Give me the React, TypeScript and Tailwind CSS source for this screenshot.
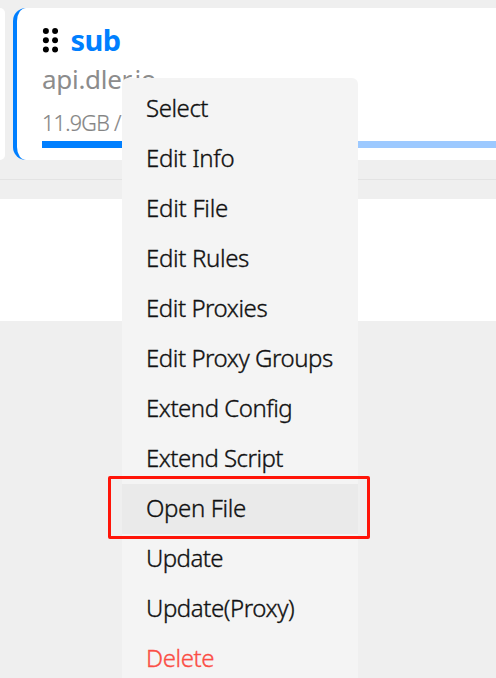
type Item = { label: string; spacing: string; tone?: string };

const items: Item[] = [
  { label: "Select", spacing: "tracking-[-0.45px]" },
  { label: "Edit Info", spacing: "tracking-[-0.3px]" },
  { label: "Edit File", spacing: "tracking-[-0.25px]" },
  { label: "Edit Rules", spacing: "tracking-[-0.35px]" },
  { label: "Edit Proxies", spacing: "tracking-[-0.45px]" },
  { label: "Edit Proxy Groups", spacing: "tracking-[-0.45px]" },
  { label: "Extend Config", spacing: "tracking-[-0.48px]" },
  { label: "Extend Script", spacing: "tracking-[-0.53px]" },
  { label: "Open File", spacing: "tracking-[-0.38px]", tone: "bg-[#eaeaea]" },
  { label: "Update", spacing: "tracking-[-0.55px]" },
  { label: "Update(Proxy)", spacing: "tracking-[-0.43px]" },
  { label: "Delete", spacing: "tracking-[-0.4px]", tone: "text-[#fb4d44]" },
];

function DragHandle() {
  return (
    <svg className="h-[26px] w-[16px] shrink-0" viewBox="0 0 16 26">
      {[3.9, 13.2, 22.6].map((y) => (
        <g key={y}>
          <circle cx="3.9" cy={y} r="3" />
          <circle cx="13.1" cy={y} r="3" />
        </g>
      ))}
    </svg>
  );
}

function ProfileCard() {
  return (
    <div className="h-[152px] flex-1 overflow-hidden rounded-l-[13px] border-l-4 border-[#007fff] bg-white pl-[24.5px]">
      <div className="flex h-[55px] items-center pt-[9px]">
        <DragHandle />
        <span className="ml-[13px] text-[29px] leading-[34px] font-bold tracking-[-0.6px] text-[#007fff]">sub</span>
      </div>
      <div className="h-[36px] pl-[0.5px] text-[26px] leading-[33px] tracking-[-0.3px] text-[#8c8c8c]">api.dler.io</div>
      <div className="h-[42px] pt-[7px] pl-[0.5px] text-[21.5px] leading-[33px] font-light tracking-[-0.7px] text-[#858585] [-webkit-text-stroke:0.2px_#858585]">11.9GB /</div>
      <div className="flex h-[6.5px] bg-[#9cc9ff]">
        <div className="w-[190px] bg-[#007fff]" />
      </div>
    </div>
  );
}

export default function App() {
  return (
    <div className="relative h-[678px] w-[496px] overflow-hidden bg-[#efefef] font-['Noto_Sans','Open_Sans',sans-serif]">
      <div className="flex h-[180px] gap-2 border-b border-[#e3e3e3] pt-2">
        <div className="h-[152px] w-[5px] rounded-r-[12px] bg-white" />
        <ProfileCard />
      </div>
      <div className="mt-[19px] h-[122px] bg-white" />

      <ul className="absolute top-[78px] left-[121.5px] h-[620px] w-[236px] rounded-t-[6px] bg-[#f4f4f4] pt-[6px] text-[24px] leading-[48px] font-light text-[#111]">
        {items.map(({ label, spacing, tone }) => (
          <li key={label} className={`h-[50px] pl-[24.5px] whitespace-nowrap [-webkit-text-stroke:0.35px_currentColor] ${tone ?? ""}`}>
            <span className={spacing}>{label}</span>
          </li>
        ))}
      </ul>
      <div className="absolute top-[476px] left-[108px] h-[63px] w-[262px] rounded-[2px] border-[3px] border-[#ff1408]" />
    </div>
  );
}
